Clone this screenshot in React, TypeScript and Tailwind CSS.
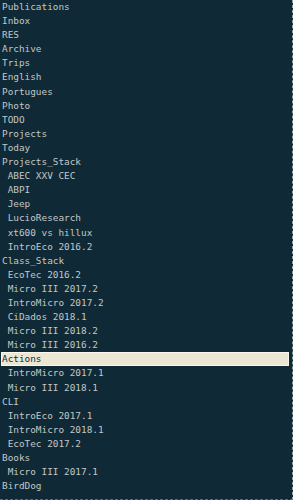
import React from 'react';

const items: [string, number][] = [
  ['Publications', 0],
  ['Inbox', 0],
  ['RES', 0],
  ['Archive', 0],
  ['Trips', 0],
  ['English', 0],
  ['Portugues', 0],
  ['Photo', 0],
  ['TODO', 0],
  ['Projects', 0],
  ['Today', 0],
  ['Projects_Stack', 0],
  ['ABEC XXV CEC', 1],
  ['ABPI', 1],
  ['Jeep', 1],
  ['LucioResearch', 1],
  ['xt600 vs hillux', 1],
  ['IntroEco 2016.2', 1],
  ['Class_Stack', 0],
  ['EcoTec 2016.2', 1],
  ['Micro III 2017.2', 1],
  ['IntroMicro 2017.2', 1],
  ['CiDados 2018.1', 1],
  ['Micro III 2018.2', 1],
  ['Micro III 2016.2', 1],
  ['Actions', 0],
  ['IntroMicro 2017.1', 1],
  ['Micro III 2018.1', 1],
  ['CLI', 0],
  ['IntroEco 2017.1', 1],
  ['IntroMicro 2018.1', 1],
  ['EcoTec 2017.2', 1],
  ['Books', 0],
  ['Micro III 2017.1', 1],
  ['BirdDog', 0],
];

const selected = 'Actions';

export default function App() {
  return (
    <div className="w-[293px] h-[500px] overflow-hidden bg-[#0f2a36] border-r border-r-[#9aa4a4] border-b border-dashed border-b-[#5a6e74] font-['DejaVu_Sans_Mono',monospace] text-[9.4px] leading-[14.1px] text-[#c3c7c6]">
      <ul className="pl-[1px] pr-[3px]">
        {items.map(([name, indent]) =>
          name === selected ? (
            <li
              key={name}
              className="h-[14.1px] whitespace-pre bg-[#ece7d5] text-[#0f2a36] outline outline-1 outline-[#fbf7ea] -outline-offset-1 pl-[1px]"
            >
              {(indent ? ' ' : '') + name}
            </li>
          ) : (
            <li key={name} className="h-[14.1px] whitespace-pre pl-[1px]">
              {(indent ? ' ' : '') + name}
            </li>
          )
        )}
      </ul>
    </div>
  );
}
